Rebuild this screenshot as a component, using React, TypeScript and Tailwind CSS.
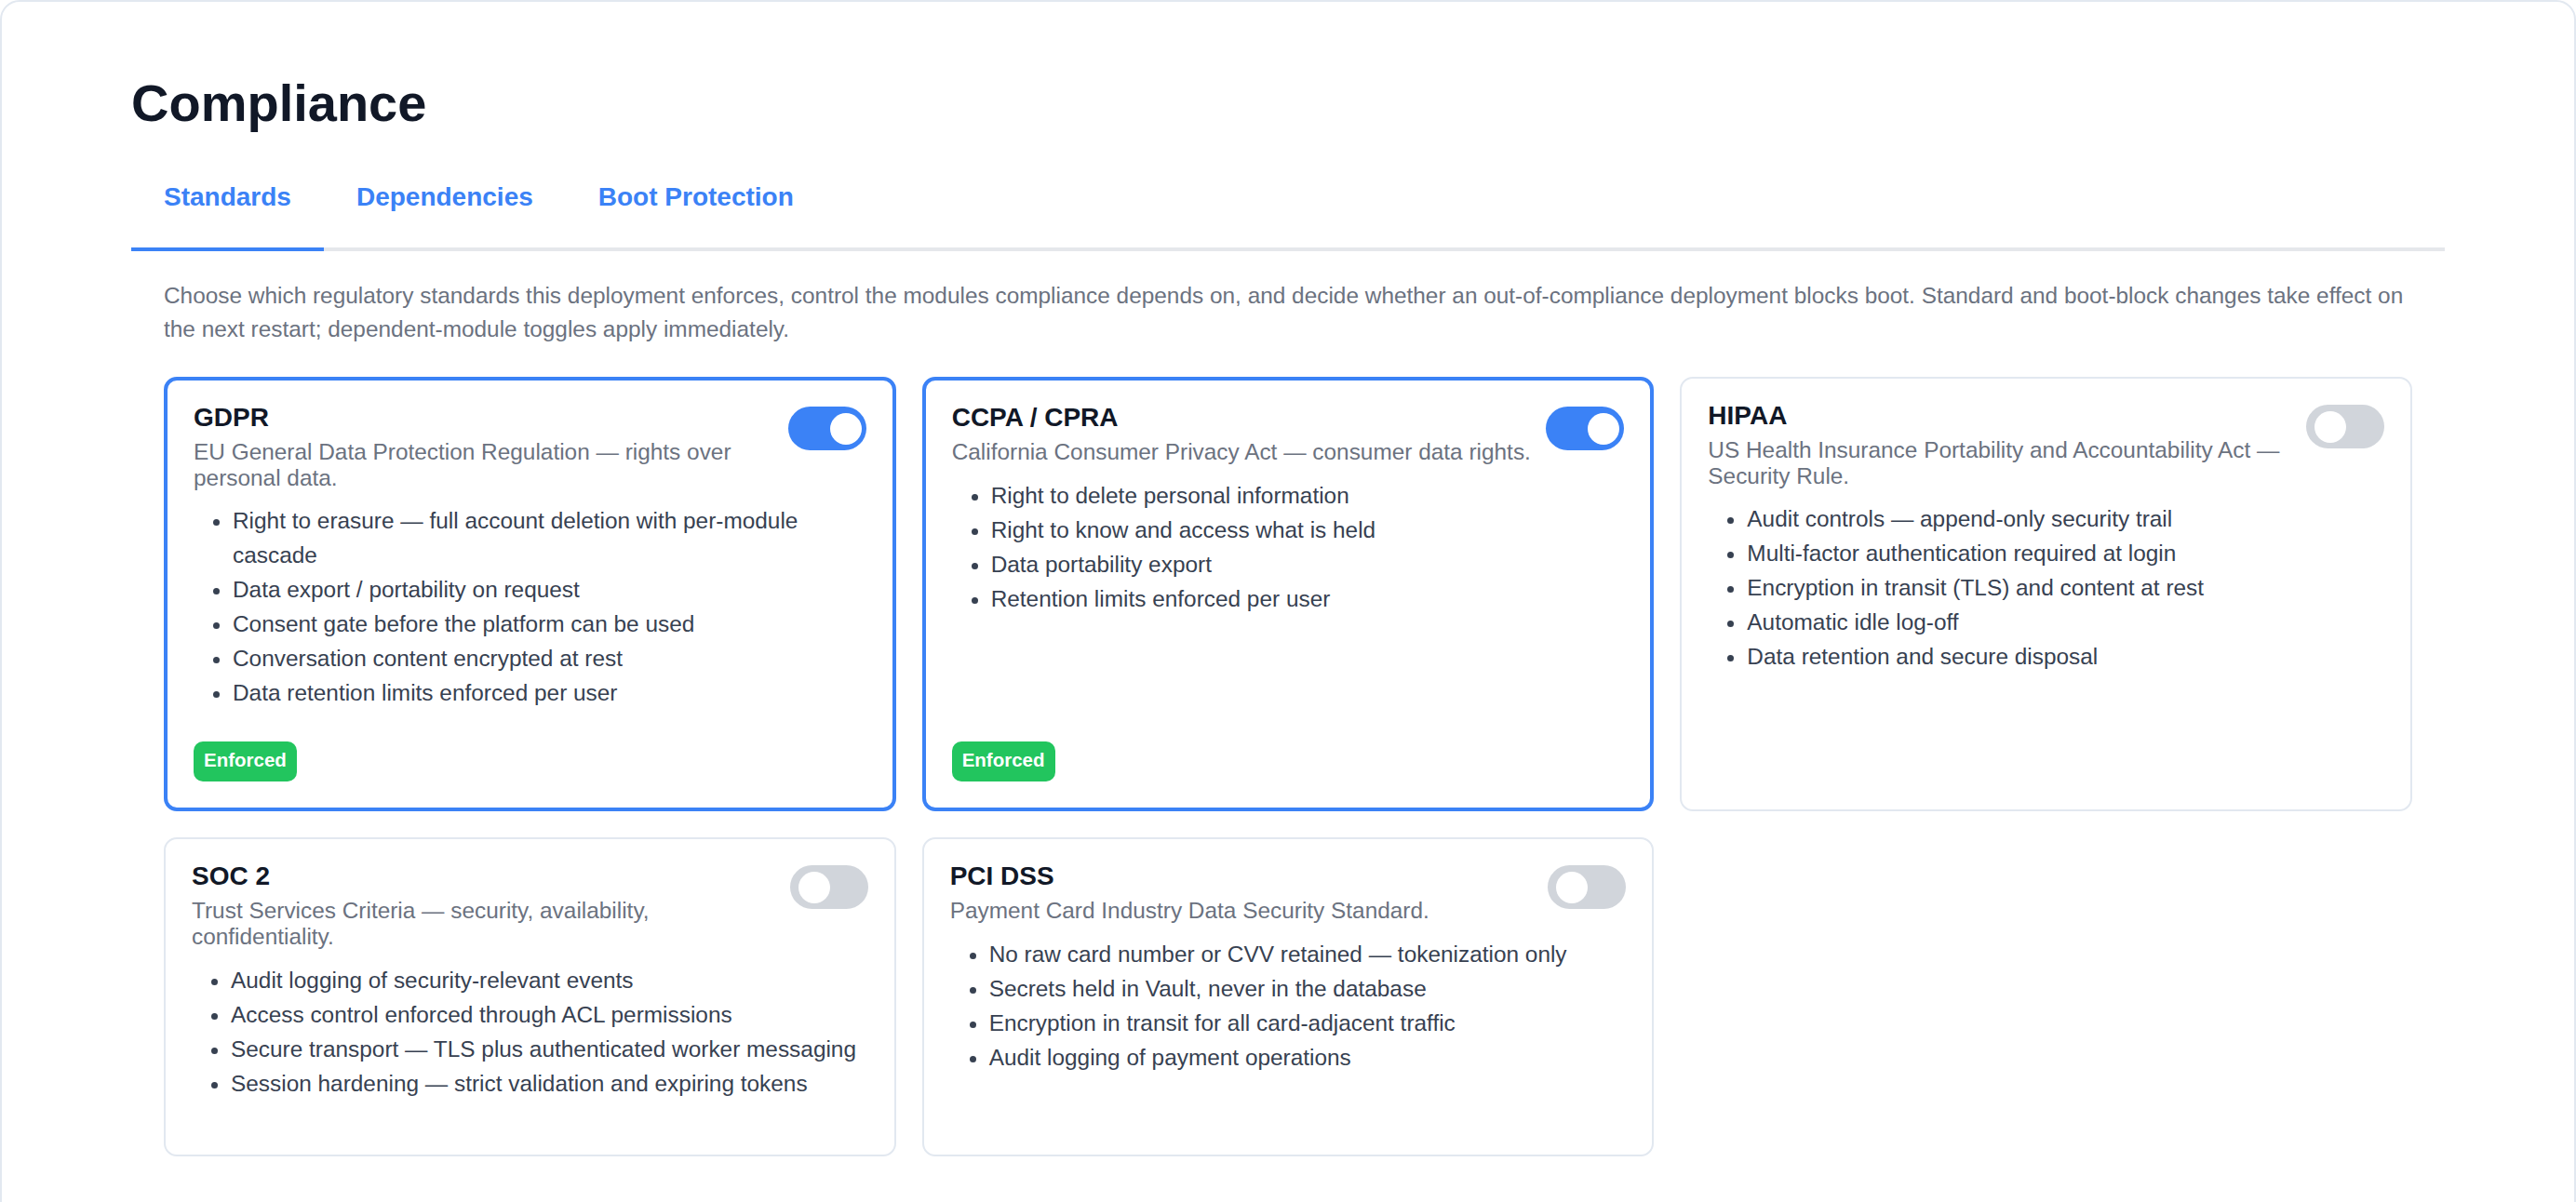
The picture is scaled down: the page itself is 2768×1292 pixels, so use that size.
import React, { useState } from 'react';

type Standard = {
  id: string;
  name: string;
  description: string;
  items: string[];
  enabled: boolean;
};

const STANDARDS: Standard[] = [
  {
    id: 'gdpr',
    name: 'GDPR',
    description: 'EU General Data Protection Regulation — rights over personal data.',
    items: [
      'Right to erasure — full account deletion with per-module cascade',
      'Data export / portability on request',
      'Consent gate before the platform can be used',
      'Conversation content encrypted at rest',
      'Data retention limits enforced per user',
    ],
    enabled: true,
  },
  {
    id: 'ccpa',
    name: 'CCPA / CPRA',
    description: 'California Consumer Privacy Act — consumer data rights.',
    items: [
      'Right to delete personal information',
      'Right to know and access what is held',
      'Data portability export',
      'Retention limits enforced per user',
    ],
    enabled: true,
  },
  {
    id: 'hipaa',
    name: 'HIPAA',
    description: 'US Health Insurance Portability and Accountability Act — Security Rule.',
    items: [
      'Audit controls — append-only security trail',
      'Multi-factor authentication required at login',
      'Encryption in transit (TLS) and content at rest',
      'Automatic idle log-off',
      'Data retention and secure disposal',
    ],
    enabled: false,
  },
  {
    id: 'soc2',
    name: 'SOC 2',
    description: 'Trust Services Criteria — security, availability, confidentiality.',
    items: [
      'Audit logging of security-relevant events',
      'Access control enforced through ACL permissions',
      'Secure transport — TLS plus authenticated worker messaging',
      'Session hardening — strict validation and expiring tokens',
    ],
    enabled: false,
  },
  {
    id: 'pci',
    name: 'PCI DSS',
    description: 'Payment Card Industry Data Security Standard.',
    items: [
      'No raw card number or CVV retained — tokenization only',
      'Secrets held in Vault, never in the database',
      'Encryption in transit for all card-adjacent traffic',
      'Audit logging of payment operations',
    ],
    enabled: false,
  },
];

const TABS = ['Standards', 'Dependencies', 'Boot Protection'];

const Toggle: React.FC<{ on: boolean; onChange: () => void }> = ({ on, onChange }) => (
  <button
    type="button"
    role="switch"
    aria-checked={on}
    onClick={onChange}
    className={`relative h-[47px] w-[84px] shrink-0 rounded-full transition-colors ${
      on ? 'bg-[#3b82f6]' : 'bg-[#d1d5db]'
    }`}
  >
    <span
      className={`absolute top-[6.5px] h-[34px] w-[34px] rounded-full bg-white transition-all ${
        on ? 'left-[45px]' : 'left-[9px]'
      }`}
    />
  </button>
);

const StandardCard: React.FC<{ standard: Standard; onToggle: () => void }> = ({ standard, onToggle }) => {
  const on = standard.enabled;
  return (
    <div
      className={`flex flex-col rounded-[14px] bg-white p-[28px] ${
        on ? 'border-4 border-[#3b82f6]' : 'border-2 border-[#e2e8f0]'
      }`}
    >
      <div className="flex items-start justify-between gap-[14px]">
        <div className="min-w-0 flex-1">
          <h3 className="text-[28px] leading-[23px] font-bold text-[#111827]">{standard.name}</h3>
          <p className="mt-[12px] text-[24.4px] leading-[27.7px] text-[#6b7280]">{standard.description}</p>
        </div>
        <Toggle on={on} onChange={onToggle} />
      </div>

      <ul className="mt-[14px] mb-[30px] list-disc pl-[42px] text-[24.4px] leading-[37px] text-[#374151]">
        {standard.items.map((item) => (
          <li key={item}>{item}</li>
        ))}
      </ul>

      {on && (
        <div className="mt-auto flex pt-[4px]">
          <span className="rounded-[10px] bg-[#22c55e] px-[11px] pt-[8px] pb-[11px] text-[20.5px] leading-[24px] font-bold text-white">
            Enforced
          </span>
        </div>
      )}
    </div>
  );
};

export default function App() {
  const [activeTab, setActiveTab] = useState('Standards');
  const [standards, setStandards] = useState<Standard[]>(STANDARDS);

  const toggle = (id: string) =>
    setStandards((prev) => prev.map((s) => (s.id === id ? { ...s, enabled: !s.enabled } : s)));

  return (
    <div className="min-h-screen bg-white font-['Liberation_Sans',Arial,sans-serif]">
      <div className="rounded-[21px] border-2 border-[#e2e8f0] bg-white px-[139px] pt-[77px] pb-[140px]">
        <h1 className="text-[56px] leading-[64px] font-bold text-[#111827]">Compliance</h1>

        <div className="mt-[29px] flex border-b-4 border-[#e5e7eb]">
          {TABS.map((tab) => (
            <button
              key={tab}
              type="button"
              onClick={() => setActiveTab(tab)}
              className={`-mb-[4px] border-b-4 px-[35px] pt-[20px] pb-[34px] text-[28px] leading-[40px] font-semibold text-[#3b82f6] ${
                activeTab === tab ? 'border-[#3b82f6]' : 'border-transparent'
              }`}
            >
              {tab}
            </button>
          ))}
        </div>

        <div className="px-[35px] pt-[30px]">
          <p className="text-[24.4px] leading-[35.5px] text-[#6b7280]">
            Choose which regulatory standards this deployment enforces, control the modules compliance depends on, and
            decide whether an out-of-compliance deployment blocks boot. Standard and boot-block changes take effect on
            the next restart; dependent-module toggles apply immediately.
          </p>

          <div className="mt-[34px] grid grid-cols-3 gap-[28px]">
            {standards.map((s) => (
              <StandardCard key={s.id} standard={s} onToggle={() => toggle(s.id)} />
            ))}
          </div>
        </div>
      </div>
    </div>
  );
}
